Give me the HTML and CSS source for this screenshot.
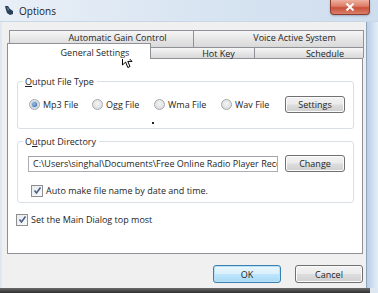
FILE: index.html
```html
<!DOCTYPE html>
<html>
<head>
<meta charset="utf-8">
<link rel="stylesheet" href="styles.css">
</head>
<body>
<div class="window">
  <div class="titlebar">
    <svg class="app-icon" width="10" height="11" viewBox="0 0 10 11">
      <path d="M1 1 L4 1 L6 4 L9 6 L9 9 L6 10 L3 8 L2 5 Z" fill="#2b3f57"/>
      <path d="M3 2 L5 4 L4 6 Z" fill="#6d8fb3"/>
    </svg>
    <span class="title">Options</span>
    <div class="close">
      <svg width="10" height="8" viewBox="0 0 10 8"><path d="M1.5 0.5 L8.5 7.5 M8.5 0.5 L1.5 7.5" stroke="#fff" stroke-width="2"/></svg>
    </div>
  </div>
  <div class="body">
    <div class="client">
      <div class="tabctl">
        <div class="tabrow row1">
          <div class="tab t-agc">Automatic Gain Control</div>
          <div class="tab t-vas">Voice Active System</div>
        </div>
        <div class="tabrow row2">
          <div class="tab t-gen selected">General Settings</div>
          <div class="tab t-hot">Hot Key</div>
          <div class="tab t-sch">Schedule</div>
        </div>
        <div class="panel">
          <fieldset class="group g-type">
            <legend><u>O</u>utput File Type</legend>
            <div class="radios">
              <label class="radio r-mp3"><span class="dot on"></span>Mp3 File</label>
              <label class="radio r-ogg"><span class="dot"></span>Ogg File</label>
              <label class="radio r-wma"><span class="dot"></span>Wma File</label>
              <label class="radio r-wav"><span class="dot"></span>Wav File</label>
              <div class="btn small">Settings</div>
            </div>
            <span class="stray"></span>
          </fieldset>
          <fieldset class="group g-dir">
            <legend>O<u>u</u>tput Directory</legend>
            <div class="dir-row">
              <div class="path">C:\Users\singhal\Documents\Free Online Radio Player Recc</div>
              <div class="btn small">Change</div>
            </div>
            <label class="check c-auto"><span class="box"><svg width="9" height="9" viewBox="0 0 9 9"><path d="M1.5 4.5 L3.5 7 L7.5 1.5" fill="none" stroke="#4a5f86" stroke-width="1.6"/></svg></span>Auto make file name by date and time.</label>
          </fieldset>
          <label class="check c-top"><span class="box"><svg width="9" height="9" viewBox="0 0 9 9"><path d="M1.5 4.5 L3.5 7 L7.5 1.5" fill="none" stroke="#4a5f86" stroke-width="1.6"/></svg></span>Set the Main Dialog top most</label>
        </div>
        <svg class="cursor" width="12" height="18" viewBox="0 0 12 18">
          <path d="M0.5 0.5 L0.5 14 L3.6 11 L5.8 16.5 L8 15.5 L5.8 10.4 L10 10.4 Z" fill="#fff" stroke="#000" stroke-width="1"/>
        </svg>
      </div>
      <div class="actions">
        <div class="btn big ok">OK</div>
        <div class="btn big">Cancel</div>
      </div>
    </div>
    <div class="frame-right"></div>
  </div>
  <div class="shadow"></div>
</div>
</body>
</html>
```
FILE: styles.css
```css
* { box-sizing: border-box; }
html, body { margin: 0; padding: 0; }
body {
  width: 378px;
  height: 293px;
  overflow: hidden;
  font-family: "Open Sans", "Noto Sans", sans-serif;
  font-size: 9px;
  color: #1e1e1e;
  background: #8a8f96;
}
.window {
  width: 378px;
  height: 293px;
  display: flex;
  flex-direction: column;
  background: #dfe8f2;
}
.titlebar {
  height: 22px;
  display: flex;
  align-items: center;
  padding-left: 4px;
  background: linear-gradient(to right, #e9eff7, #d6e3f1 60%, #cfdeef);
  border-bottom: 1px solid #c9d6e4;
}
.app-icon { margin-right: 5px; }
.title { font-size: 10px; color: #222; }
.close {
  align-self: flex-start;
  margin-left: auto;
  margin-right: 8px;
  width: 40px;
  height: 15px;
  display: flex;
  align-items: center;
  justify-content: center;
  border: 1px solid #8c3b2c;
  border-top: none;
  border-radius: 0 0 4px 4px;
  background: linear-gradient(to bottom, #eeb0a0, #dc7c66 45%, #c9503a 55%, #d98069);
  box-shadow: 0 1px 2px rgba(120,140,170,0.6);
}
.body {
  flex: 1;
  display: flex;
  min-height: 0;
}
.client {
  margin-left: 2px;
  width: 364px;
  background: #f0f0f0;
  display: flex;
  flex-direction: column;
  padding: 8px 3px 0 5px;
}
.frame-right {
  flex: 1;
  border-left: 1px solid #8fa3ba;
  background: linear-gradient(to right, #b9cde4, #cfdef0 50%, #e6eef7);
}
.tabctl { position: relative; }
.tabrow { display: flex; padding-left: 2px; }
.tab {
  background: linear-gradient(to bottom, #f6f6f6, #e6e6e6 50%, #d9d9d9);
  border: 1px solid #8e9196;
  border-bottom: none;
  margin-right: -1px;
  color: #1e1e1e;
  text-align: center;
  padding-left: 32px;
  white-space: nowrap;
}
.row1 .tab { height: 17px; line-height: 14px; }
.row2 { align-items: flex-end; height: 11px; }
.row2 .tab { height: 11px; line-height: 11px; }
.t-agc { width: 185px; }
.t-vas { width: 171px; }
.t-gen { width: 142px; }
.t-hot { width: 105px; }
.t-sch { width: 110px; }
.row2 .tab.selected {
  height: 16px;
  margin-bottom: -1px;
  margin-left: -2px;
  width: 144px;
  padding-top: 3px;
  line-height: 11px;
  background: #fff;
  position: relative;
  z-index: 1;
}
.panel {
  height: 196px;
  background: #fff;
  border: 1px solid #8e9196;
  padding: 16px 8px 0 9px;
  display: flex;
  flex-direction: column;
  align-items: flex-start;
}
.group {
  margin: 0;
  width: 337px;
  border: 1px solid #d9dfe4;
  border-radius: 3px;
  padding: 0 8px 0 5px;
  position: relative;
}
.group legend {
  padding: 0 3px 0 2px;
  line-height: 13px;
  color: #1e1e1e;
}
.g-type { padding-bottom: 15px; }
.radios {
  margin-top: 8px;
  display: flex;
  align-items: center;
  height: 17px;
}
.radio {
  display: flex;
  align-items: center;
  white-space: nowrap;
}
.r-mp3 { margin-left: 6px; width: 63px; }
.r-ogg { width: 62px; }
.r-wma { width: 67px; }
.r-wav { width: 64px; }
.dot {
  width: 11px;
  height: 11px;
  border-radius: 50%;
  border: 1px solid #a5a9ae;
  background: radial-gradient(circle at 50% 40%, #f4f4f4, #d4d6d8);
  margin-right: 3px;
  position: relative;
  flex: none;
}
.dot.on::after {
  content: "";
  position: absolute;
  left: 2px; top: 2px;
  width: 5px; height: 5px;
  border-radius: 50%;
  background: radial-gradient(circle at 40% 40%, #9cc3ea, #24568f);
  box-shadow: 0 0 0 1px #b7d3ee;
}
.btn {
  border: 1px solid #707070;
  border-radius: 3px;
  background: linear-gradient(to bottom, #f3f3f3, #ebebeb 48%, #dddddd 52%, #cfcfcf);
  box-shadow: inset 0 0 0 1px #fbfbfb;
  color: #1e1e1e;
  text-align: center;
  display: flex;
  align-items: center;
  justify-content: center;
}
.btn.small { width: 60px; height: 17px; margin-left: auto; }
.stray {
  position: absolute;
  left: 134px;
  top: 34px;
  width: 2px;
  height: 2px;
  background: #222;
}
.g-dir { margin-top: 6px; padding-bottom: 5px; }
.dir-row {
  margin-top: 7px;
  display: flex;
  align-items: center;
}
.path {
  margin-left: 5px;
  width: 250px;
  height: 16px;
  border: 1px solid #abadb3;
  border-top-color: #a0a3aa;
  background: #fff;
  padding-left: 4px;
  line-height: 14px;
  white-space: nowrap;
  overflow: hidden;
}
.check {
  display: flex;
  align-items: center;
  white-space: nowrap;
}
.box {
  width: 12px;
  height: 12px;
  border: 1px solid #8f8f8f;
  background: linear-gradient(to bottom right, #e8ebee, #f8f9fa);
  display: flex;
  align-items: center;
  justify-content: center;
  margin-right: 3px;
  flex: none;
}
.c-auto { margin: 12px 0 0 8px; }
.c-top { margin: 10px 0 0 -1px; }
.cursor {
  position: absolute;
  left: 115px;
  top: 21px;
}
.actions {
  display: flex;
  justify-content: flex-end;
  gap: 14px;
  margin-top: 11px;
}
.btn.big { width: 68px; height: 18px; }
.btn.ok {
  border-color: #3c7fb1;
  box-shadow: inset 0 0 0 1px #b9e2f8;
  background: linear-gradient(to bottom, #eaf6fd, #d9f0fc 48%, #bee6fd 52%, #a7d9f5);
}
.shadow {
  height: 5px;
  background: linear-gradient(to bottom, #6a6a6a, #2e2e2e);
  margin-right: 8px;
}
```
